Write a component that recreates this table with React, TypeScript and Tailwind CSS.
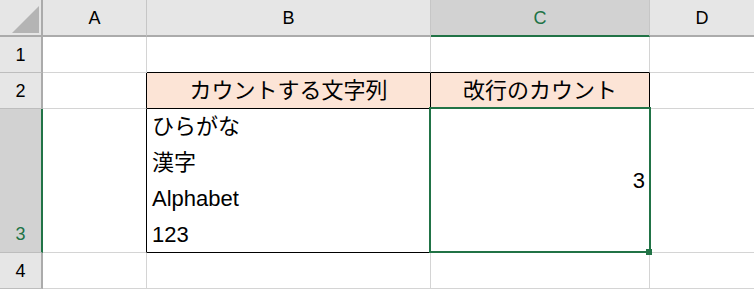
import React from "react";

const GREEN = "border-[#217346]";

function ColHead({ label, selected, last }: { label: string; selected?: boolean; last?: boolean }) {
  return (
    <div
      className={
        "flex items-center justify-center text-[18px] border-b-2 " +
        (last ? "" : "border-r border-r-[#c6c6c6] ") +
        (selected ? "bg-[#d2d2d2] border-b-[#217346] text-[#217346]" : "bg-[#e6e6e6] border-b-[#ababab]")
      }
    >
      <span className="leading-none">{label}</span>
    </div>
  );
}

function RowHead({ label, selected, bottom }: { label: string; selected?: boolean; bottom?: boolean }) {
  return (
    <div
      className={
        "flex justify-center border-r-2 border-b text-[18px] " +
        (selected
          ? "bg-[#d2d2d2] border-r-[#217346] border-b-[#bdbdbd] text-[#217346] items-end pb-[6px]"
          : "bg-[#e6e6e6] border-r-[#ababab] border-b-[#bdbdbd] items-center")
      }
    >
      <span className={bottom ? "leading-[24px]" : "leading-none"}>{label}</span>
    </div>
  );
}

export default function App() {
  return (
    <div className="relative w-[754px] h-[289px] overflow-hidden bg-white text-black font-['Liberation_Sans','Noto_Sans_CJK_JP',sans-serif]">
      <div className="grid grid-cols-[43px_104px_284px_219px_104px] grid-rows-[37px_36px_36px_144px_36px] w-full h-full">
        {/* corner */}
        <div className="relative bg-[#e6e6e6] border-r-2 border-b-2 border-[#ababab]">
          <svg className="absolute left-0 top-0" width="43" height="37" viewBox="0 0 43 37">
            <polygon points="12,33 39,33 39,6" fill="#b4b4b4" />
          </svg>
        </div>
        <ColHead label="A" />
        <ColHead label="B" />
        <ColHead label="C" selected />
        <ColHead label="D" last />

        {/* row 1 */}
        <RowHead label="1" />
        <div className="border-r border-b border-[#d4d4d4]" />
        <div className="border-r border-r-[#d4d4d4] border-b border-b-black" />
        <div className="border-r border-r-[#d4d4d4] border-b border-b-black" />
        <div className="border-b border-[#d4d4d4]" />

        {/* row 2 */}
        <RowHead label="2" />
        <div className="border-r border-r-black border-b border-b-[#d4d4d4]" />
        <div className="flex items-center justify-center bg-[#fce4d6] border-r border-b border-black text-[22px]">
          <span className="leading-none">カウントする文字列</span>
        </div>
        <div className="flex items-center justify-center bg-[#fce4d6] border-r border-b border-black text-[22px]">
          <span className="leading-none">改行のカウント</span>
        </div>
        <div className="border-b border-[#d4d4d4]" />

        {/* row 3 */}
        <RowHead label="3" selected bottom />
        <div className="border-r border-r-black border-b border-b-[#d4d4d4]" />
        <div className="flex flex-col justify-start pl-[5px] border-r border-b border-black text-[22px] leading-[36px]">
          <span>ひらがな</span>
          <span>漢字</span>
          <span>Alphabet</span>
          <span>123</span>
        </div>
        <div className="flex items-center justify-end pr-[4px] border-r border-b border-[#d4d4d4] text-[22px]">
          <span className="leading-none">3</span>
        </div>
        <div className="border-b border-[#d4d4d4]" />

        {/* row 4 */}
        <RowHead label="4" />
        <div className="border-r border-b border-[#d4d4d4]" />
        <div className="border-r border-b border-[#d4d4d4]" />
        <div className="border-r border-b border-[#d4d4d4]" />
        <div className="border-b border-[#d4d4d4]" />
      </div>

      {/* active cell frame with fill handle */}
      <div className={"absolute left-[429px] top-[107px] w-[222px] h-[146px] border-2 " + GREEN} />
      <div className="absolute left-[646px] top-[249px] w-[6px] h-[6px] bg-[#217346]" />
    </div>
  );
}
